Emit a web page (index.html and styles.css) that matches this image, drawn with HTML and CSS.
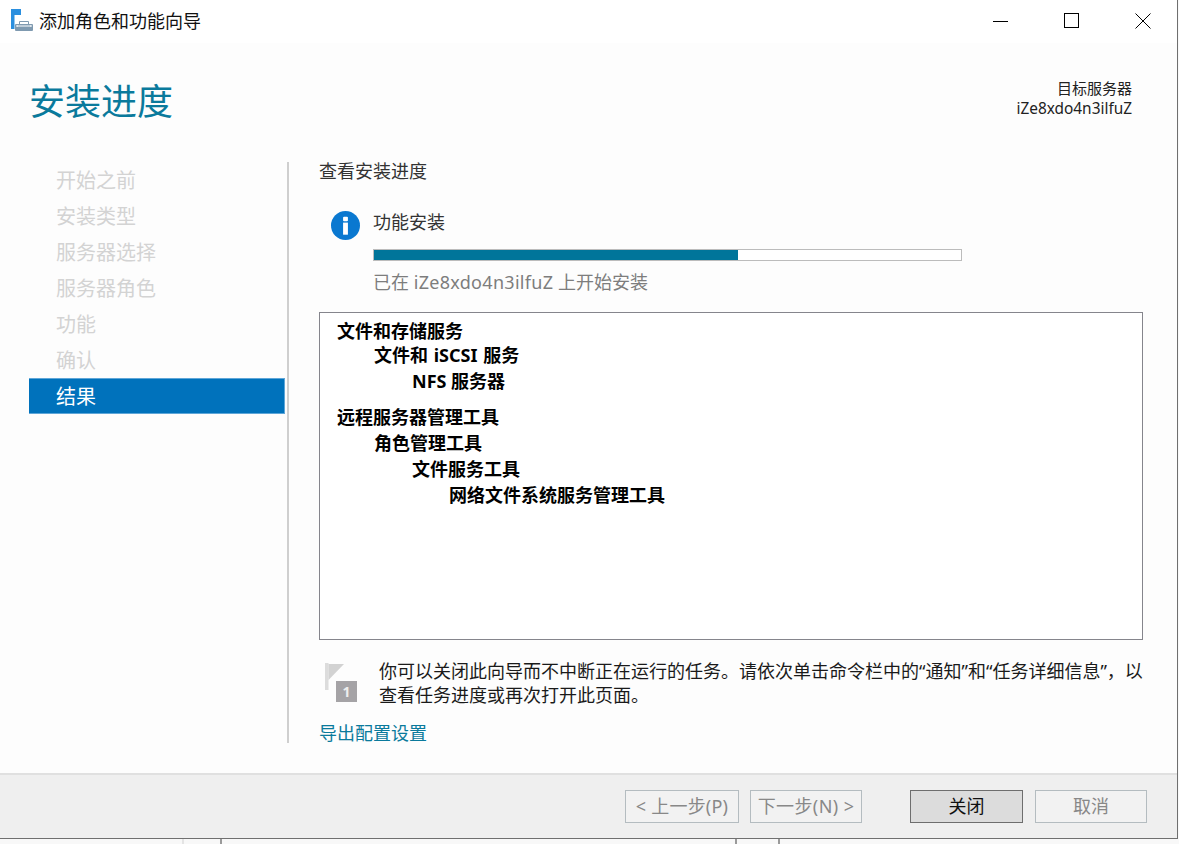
FILE: index.html
```html
<!DOCTYPE html>
<html lang="zh-CN">
<head>
<meta charset="utf-8">
<title>添加角色和功能向导</title>
<link rel="stylesheet" href="styles.css">
</head>
<body>
<div class="window">
  <header class="titlebar">
    <svg class="app-icon" width="24" height="24" viewBox="0 0 24 24">
      <rect x="0" y="0" width="10" height="6" fill="#2a8fdf"/>
      <rect x="0" y="6" width="3.5" height="14" fill="#2a8fdf"/>
      <path d="M8.5 15V12.5H17.5V15" fill="none" stroke="#7f9ab0" stroke-width="1"/>
      <rect x="4" y="15" width="18" height="7" rx="1" fill="#7f9ab0"/>
      <path d="M6 17H20M6 16V18M20 16V18" stroke="#fff" stroke-width="1" fill="none"/>
    </svg>
    <span class="title">添加角色和功能向导</span>
    <div class="caption-buttons">
      <svg width="16" height="16" viewBox="0 0 16 16"><path d="M0 8.5H15" stroke="#000" fill="none"/></svg>
      <svg width="16" height="16" viewBox="0 0 16 16"><rect x="0.5" y="0.5" width="14" height="14" stroke="#000" fill="none"/></svg>
      <svg width="16" height="16" viewBox="0 0 16 16"><path d="M0.5 0.5L15.5 15.5M15.5 0.5L0.5 15.5" stroke="#000" fill="none"/></svg>
    </div>
  </header>

  <div class="content">
    <div class="head">
      <h1 class="page-title">安装进度</h1>
      <div class="target">
        <div>目标服务器</div>
        <div class="target-host">iZe8xdo4n3ilfuZ</div>
      </div>
    </div>

    <div class="columns">
      <nav class="steps">
        <div class="step">开始之前</div>
        <div class="step">安装类型</div>
        <div class="step">服务器选择</div>
        <div class="step">服务器角色</div>
        <div class="step">功能</div>
        <div class="step">确认</div>
        <div class="step current">结果</div>
      </nav>

      <main class="main">
        <div class="subhead">查看安装进度</div>

        <div class="status">
          <svg class="info-icon" width="29" height="29" viewBox="0 0 30 30">
            <circle cx="15" cy="15" r="15" fill="#0a78d0"/>
            <rect x="12.5" y="6" width="5" height="4.5" rx="1" fill="#fff"/>
            <rect x="12.5" y="12" width="5" height="12.5" fill="#fff"/>
          </svg>
          <div class="status-body">
            <div class="status-label">功能安装</div>
            <div class="progress"><div class="progress-fill" style="width:62%"></div></div>
            <div class="status-note">已在 <span class="host">iZe8xdo4n3ilfuZ</span> 上开始安装</div>
          </div>
        </div>

        <div class="results">
          <div class="group first">
            <div class="row">文件和存储服务</div>
            <div class="row lv1 spaced">文件和 iSCSI 服务</div>
            <div class="row lv2">NFS 服务器</div>
          </div>
          <div class="group">
            <div class="row">远程服务器管理工具</div>
            <div class="row lv1">角色管理工具</div>
            <div class="row lv2">文件服务工具</div>
            <div class="row lv3">网络文件系统服务管理工具</div>
          </div>
        </div>

        <div class="notice">
          <svg class="flag-icon" width="32" height="39" viewBox="0 0 32 39">
            <rect x="0" y="0" width="3.5" height="27" fill="#dcdcdc"/>
            <path d="M3.5 1H19L3.5 17Z" fill="#d2d2d2"/>
            <rect x="11" y="18" width="21" height="21" fill="#a5a3a6"/>
          </svg>
          <span class="flag-num">1</span>
          <p class="notice-text">你可以关闭此向导而不中断正在运行的任务。请依次单击命令栏中的“通知”和“任务详细信息”，以查看任务进度或再次打开此页面。</p>
        </div>

        <a class="export" href="#">导出配置设置</a>
      </main>
    </div>
  </div>

  <footer class="footer">
    <button class="btn back" disabled>&lt; 上一步(P)</button>
    <button class="btn next" disabled>下一步(N) &gt;</button>
    <button class="btn close">关闭</button>
    <button class="btn cancel" disabled>取消</button>
  </footer>
</div>
<div class="below">
  <i class="tick t1"></i><i class="tick t2"></i><i class="tick t3"></i><i class="tick t4"></i>
</div>
</body>
</html>
```
FILE: styles.css
```css
* { box-sizing: border-box; }
html, body { margin: 0; height: 844px; overflow: hidden; background: #f9f9f9; }
body { font-family: "Noto Sans", "Noto Sans CJK SC", sans-serif; font-size: 18px; color: #1a1a1a; }

.window {
  width: 1178px; height: 839px; display: flex; flex-direction: column;
  border-right: 1px solid #6f6f6f; border-bottom: 1px solid #6f6f6f; background: #fdfdfd;
}
.titlebar { height: 43px; flex: none; background: #fff; display: flex; align-items: center; padding-left: 11px; }
.app-icon { flex: none; align-self: flex-start; margin-top: 9px; }
.title { margin: -2px 0 0 4px; font-size: 18px; line-height: 24px; color: #111; }
.caption-buttons { margin-left: auto; display: flex; gap: 55px; padding-right: 26px; align-items: center; margin-top: -2px; }

.content { flex: 1; min-height: 0; display: flex; flex-direction: column; }
.head { height: 119px; flex: none; display: flex; justify-content: space-between; padding: 0 45px 0 29px; }
.page-title { margin: 32px 0 0; font-size: 36px; line-height: 54px; font-weight: 400; color: #0a7a9c; }
.target { margin-top: 34px; text-align: right; font-size: 15px; line-height: 22px; color: #222; }
.target-host { font-size: 15.4px; line-height: 20px; }

.columns { flex: 1; min-height: 0; display: flex; padding-bottom: 30px; }
.steps { width: 258px; margin-left: 29px; flex: none; }
.step { height: 36px; padding-left: 27px; font-size: 20px; line-height: 38px; color: #d3d3d3; }
.step.current { background: #0072bc; color: #fff; border: 1px solid #5ea6d8; border-width: 1px 1px 1px 0; line-height: 36px; width: 256px; }

.main { flex: 1; min-width: 0; border-left: 2px solid #cfcfcf; padding: 0 34px 0 30px; display: flex; flex-direction: column; }
.subhead { height: 49px; flex: none; line-height: 19px; color: #333; }

.status { display: flex; height: 101px; flex: none; padding-left: 12px; }
.info-icon { flex: none; }
.status-body { margin-left: 13px; width: 589px; }
.status-label { line-height: 22px; height: 38px; color: #333; }
.progress { height: 12px; border: 1px solid #bcbcbc; background: #fff; }
.progress-fill { height: 100%; background: #00759a; }
.status-note { margin-top: 8px; line-height: 26px; color: #7d7d7d; }
.host { letter-spacing: 0.3px; }

.results { height: 328px; flex: none; border: 1px solid #85858c; background: #fff; padding: 5px 17px; font-weight: 700; color: #000; }
.group { margin-bottom: 9px; }
.group.first { margin-bottom: 10px; }
.group.first .row:first-child { height: 24px; }
.row { height: 26px; line-height: 26px; }
.spaced { word-spacing: 1px; }
.lv1 { padding-left: 37px; }
.lv2 { padding-left: 75px; }
.lv3 { padding-left: 112px; }

.notice { position: relative; display: flex; flex: none; margin-top: 19px; height: 55px; padding-left: 6px; }
.flag-icon { flex: none; margin-top: 4px; }
.flag-num { position: absolute; left: 17px; top: 22px; width: 21px; height: 21px; text-align: center; font-size: 14px; line-height: 21px; font-weight: 700; color: #eee; }
.notice-text { flex: none; margin: 0 0 0 22px; line-height: 24px; color: #1a1a1a; width: 775px; }
.export { margin-top: 7px; line-height: 24px; color: #0a7a9c; text-decoration: none; }

.footer { height: 65px; flex: none; background: #efefef; border-top: 2px solid #e0e0e0; display: flex; align-items: flex-start; padding: 15px 0 0 625px; }
.btn { height: 33px; font: inherit; font-size: 18px; line-height: 29px; padding: 0; background: #f2f2f2; border: 1px solid #b4bcc0; color: #888; }
.back { width: 114px; letter-spacing: 0.2px; }
.next { width: 112px; margin-left: 11px; letter-spacing: 0.4px; }
.close { width: 113px; margin-left: 48px; background: #dcdcdc; border-color: #6e6e6e; color: #111; }
.cancel { width: 112px; margin-left: 12px; }

.below { position: relative; height: 5px; background: #f8f8f8; }
.tick { position: absolute; top: 0; width: 2px; height: 5px; background: #9a9a9a; }
.t1 { left: 182px; background: #e4e4e4; }
.t2 { left: 220px; }
.t3 { left: 735px; }
.t4 { left: 778px; }
```
